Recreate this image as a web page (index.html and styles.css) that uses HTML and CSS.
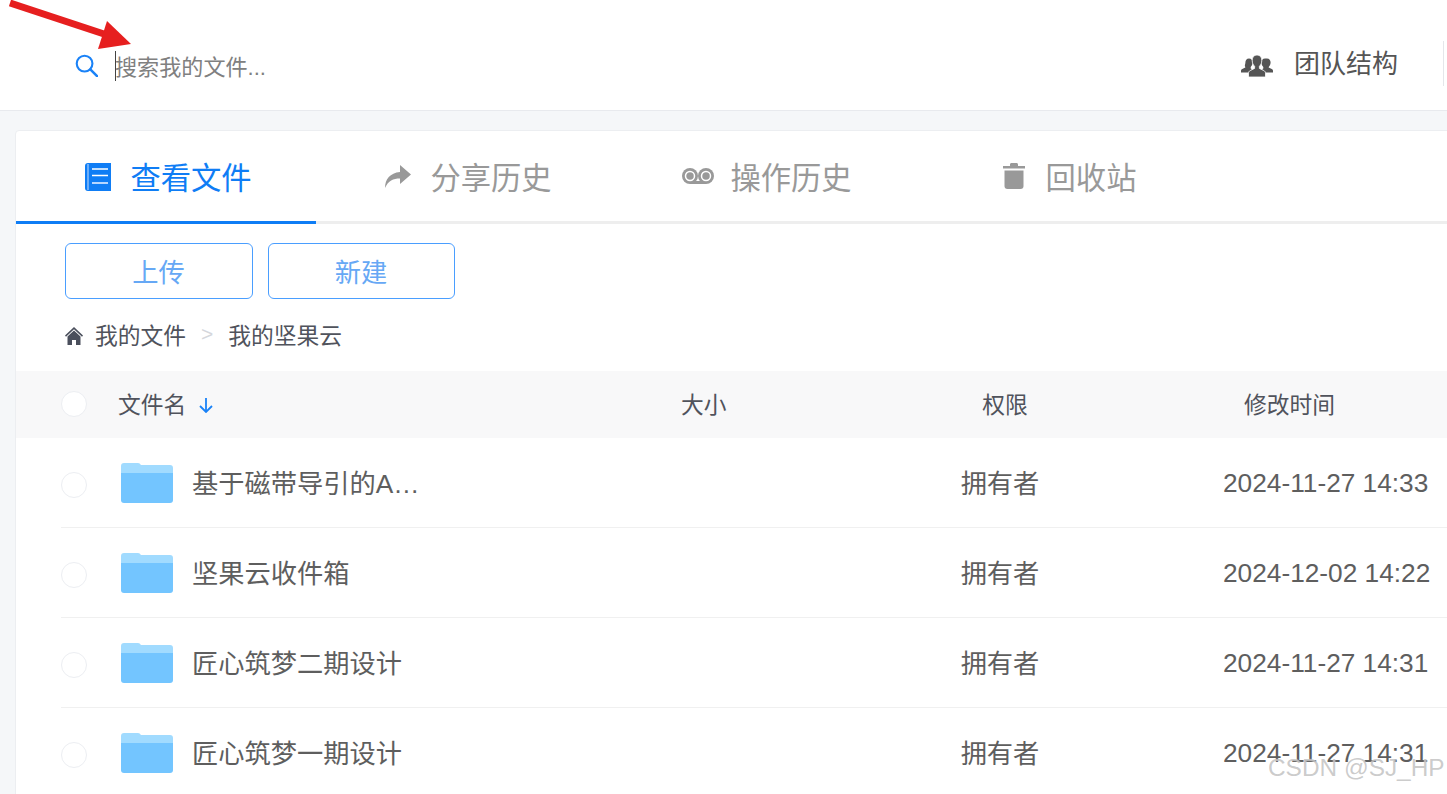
FILE: index.html
```html
<!DOCTYPE html>
<html lang="zh">
<head>
<meta charset="utf-8">
<title>我的文件</title>
<link rel="stylesheet" href="styles.css">
</head>
<body>
<div class="page">
  <header class="topbar">
    <div class="search">
      <svg class="search-icon" viewBox="0 0 24 24"><circle cx="10" cy="10" r="8.2" fill="none" stroke="#1a82f7" stroke-width="2.2"/><path d="M16 16l7 7" stroke="#1a82f7" stroke-width="2.6" stroke-linecap="round"/></svg>
      <span class="placeholder">搜索我的文件...</span>
    </div>
    <div class="team">
      <svg class="team-icon" viewBox="0 0 32 22"><g fill="#555"><path d="M8 3.5c2.4 0 3.600 1.800 3.600 4.100 0 1.900-.8 3.500-1.900 4.400v1.600l1.300.7c-1.300.8-2 1.800-2.200 3.200H0v-1.700c0-1 .5-1.500 1.300-1.900l3-1.500V12C3.200 11.100 4.400 9.500 4.400 7.600 4.400 5.300 5.600 3.500 8 3.500z"/><path d="M24 3.500c-2.400 0-3.600 1.800-3.600 4.100 0 1.900.8 3.500 1.900 4.400v1.600l-1.300.7c1.300.8 2 1.800 2.200 3.200H32v-1.700c0-1-.5-1.500-1.300-1.900l-3-1.500V12c1.100-.9 1.900-2.500 1.900-4.400 0-2.300-1.200-4.100-3.600-4.100z"/><path d="M16 0c3.200 0 4.800 2.400 4.800 5.400 0 2.500-.9 4.600-2.400 5.800v2.200l4.400 2.200c1.100.6 1.700 1.300 1.700 2.600V22H7.500v-3.800c0-1.300.6-2 1.700-2.600l4.400-2.200v-2.200c-1.500-1.200-2.400-3.300-2.400-5.800C11.200 2.400 12.800 0 16 0z" stroke="#fff" stroke-width=".8"/></g></svg>
      <span>团队结构</span>
    </div>
    <div class="top-divider"></div>
  </header>

  <main class="card">
    <nav class="tabs">
      <div class="tab tab-active">
        <span class="tab-icon tab-icon-book"><svg width="26" height="28" viewBox="0 0 26 28"><path d="M3 0h23v28H3a3 3 0 0 1-3-3V3a3 3 0 0 1 3-3z" fill="#0f7df5"/><path d="M3 1v26" stroke="#a9cffc" stroke-width="1.200"/><path d="M7 6h16M7 12.500h16" stroke="#fff" stroke-width="1.500"/><path d="M7 20h16" stroke="#b5d6ff" stroke-width="2"/></svg></span>
        <span>查看文件</span>
      </div>
      <div class="tab">
        <span class="tab-icon"><svg width="26" height="23" viewBox="0 0 26 23"><path d="M15 0l11 9.500L15 19v-5.500C8 13.500 3.500 15.500 0 23c0-9 5-15 15-16z" fill="#999"/></svg></span>
        <span>分享历史</span>
      </div>
      <div class="tab">
        <span class="tab-icon"><svg width="32" height="16" viewBox="0 0 32 16"><circle cx="8" cy="8" r="8" fill="#999"/><circle cx="24" cy="8" r="8" fill="#999"/><path d="M8 13h16v3H8z" fill="#999"/><circle cx="8" cy="8" r="4.500" fill="none" stroke="#fff" stroke-width="1.500"/><circle cx="24" cy="8" r="4.500" fill="none" stroke="#fff" stroke-width="1.500"/></svg></span>
        <span>操作历史</span>
      </div>
      <div class="tab">
        <span class="tab-icon"><svg width="22" height="26" viewBox="0 0 22 26"><path d="M0 3h7V1.500C7 .6 7.600 0 8.500 0h5c.9 0 1.500.6 1.500 1.500V3h7v2.500H0z" fill="#999"/><path d="M1.500 7.500h19V23a3 3 0 0 1-3 3h-13a3 3 0 0 1-3-3z" fill="#999"/></svg></span>
        <span>回收站</span>
      </div>
    </nav>

    <div class="actions">
      <button class="btn">上传</button>
      <button class="btn">新建</button>
    </div>

    <div class="crumbs">
      <svg class="home-icon" viewBox="0 0 18 18"><path d="M9 0l9 8.500-1 1.200L9 2.200 1 9.700 0 8.500z" fill="#4a4f5c"/><path d="M2.500 9.500L9 3.500l6.500 6V18H11v-5H7v5H2.500z" fill="#4a4f5c"/></svg>
      <span>我的文件</span>
      <span class="crumb-sep">&gt;</span>
      <span>我的坚果云</span>
    </div>

    <div class="grid thead">
      <span class="check"></span>
      <span class="th-name">文件名
        <svg class="sort-icon" viewBox="0 0 14 16"><path d="M7 1v14M1 9l6 6 6-6" fill="none" stroke="#1a82f7" stroke-width="1.800"/></svg>
      </span>
      <span>大小</span>
      <span class="th-perm">权限</span>
      <span class="th-time">修改时间</span>
    </div>

    <div class="grid row">
      <span class="check"></span>
      <span class="name"><svg class="folder" viewBox="0 0 52 40"><path d="M0 3a3 3 0 0 1 3-3h14c1.500 0 2 .8 3 2h29a3 3 0 0 1 3 3v8H0z" fill="#a1dbff"/><path d="M0 10h52v27a3 3 0 0 1-3 3H3a3 3 0 0 1-3-3z" fill="#73c5ff"/></svg><span class="fname">基于磁带导引的AGV小车设计</span></span>
      <span></span>
      <span class="perm">拥有者</span>
      <span class="time">2024-11-27 14:33</span>
    </div>
    <div class="grid row">
      <span class="check"></span>
      <span class="name"><svg class="folder" viewBox="0 0 52 40"><path d="M0 3a3 3 0 0 1 3-3h14c1.500 0 2 .8 3 2h29a3 3 0 0 1 3 3v8H0z" fill="#a1dbff"/><path d="M0 10h52v27a3 3 0 0 1-3 3H3a3 3 0 0 1-3-3z" fill="#73c5ff"/></svg><span class="fname">坚果云收件箱</span></span>
      <span></span>
      <span class="perm">拥有者</span>
      <span class="time">2024-12-02 14:22</span>
    </div>
    <div class="grid row">
      <span class="check"></span>
      <span class="name"><svg class="folder" viewBox="0 0 52 40"><path d="M0 3a3 3 0 0 1 3-3h14c1.500 0 2 .8 3 2h29a3 3 0 0 1 3 3v8H0z" fill="#a1dbff"/><path d="M0 10h52v27a3 3 0 0 1-3 3H3a3 3 0 0 1-3-3z" fill="#73c5ff"/></svg><span class="fname">匠心筑梦二期设计</span></span>
      <span></span>
      <span class="perm">拥有者</span>
      <span class="time">2024-11-27 14:31</span>
    </div>
    <div class="grid row">
      <span class="check"></span>
      <span class="name"><svg class="folder" viewBox="0 0 52 40"><path d="M0 3a3 3 0 0 1 3-3h14c1.500 0 2 .8 3 2h29a3 3 0 0 1 3 3v8H0z" fill="#a1dbff"/><path d="M0 10h52v27a3 3 0 0 1-3 3H3a3 3 0 0 1-3-3z" fill="#73c5ff"/></svg><span class="fname">匠心筑梦一期设计</span></span>
      <span></span>
      <span class="perm">拥有者</span>
      <span class="time">2024-11-27 14:31</span>
    </div>
  </main>

  <svg class="red-arrow" viewBox="0 0 135 50"><path d="M10 3L104 34" stroke="#e61f1f" stroke-width="7"/><path d="M107 21L131 44 98 49z" fill="#e61f1f"/></svg>
  <div class="caret"></div>
  <div class="watermark">CSDN @SJ_HP</div>
</div>
</body>
</html>
```

FILE: styles.css
```css
* { box-sizing: border-box; }
html, body { margin: 0; padding: 0; }
body {
  font-family: "Liberation Sans", "Noto Sans CJK SC", sans-serif;
  background: #f5f7f9;
  color: #606266;
  overflow: hidden;
}
.page {
  position: relative;
  width: 1447px;
  height: 794px;
  overflow: hidden;
}
.topbar {
  height: 111px;
  background: #fff;
  border-bottom: 1px solid #e8eaee;
  display: flex;
  align-items: center;
  padding-left: 75px;
  position: relative;
}
.search { display: flex; align-items: center; flex: 1; padding-top: 21px; }
.search-icon { width: 23px; height: 23px; margin-right: 17px; }
.placeholder { font-size: 22.1px; color: #808080; line-height: 30px; padding-top: 4px; }
.team { display: flex; align-items: center; font-size: 26px; color: #555; margin-top: 20px; }
.team-icon { width: 32px; height: 22px; margin-right: 21px; margin-top: 2px; }
.team span { line-height: 36px; position: relative; top: -1px; }
.top-divider { width: 1px; height: 45px; background: #e4e6ea; margin: 17px 3px 0 45px; }
.card {
  width: 1500px;
  height: 700px;
  margin: 19px 0 0 15px;
  background: #fff;
  border: 1px solid #eceef1;
  border-radius: 4px;
}
.tabs {
  display: flex;
  height: 93px;
  border-bottom: 3px solid #eeeeee;
}
.tab {
  width: 300px;
  height: 93px;
  display: flex;
  align-items: center;
  justify-content: center;
  gap: 14px;
  font-size: 30.3px;
  color: #999;
  padding-bottom: 3px;
}
.tab-active { color: #0f7df5; border-bottom: 3px solid #0f7df5; padding-bottom: 0; }
.tab-icon { width: 36px; display: flex; justify-content: center; }
.tab-icon-book { padding-top: 1px; }
.actions { display: flex; gap: 15px; padding: 19px 0 0 49px; }
.btn {
  width: 188px;
  height: 56px;
  background: #fff;
  border: 1px solid #4a9eff;
  border-radius: 6px;
  font: 26.25px "Liberation Sans", "Noto Sans CJK SC", sans-serif;
  color: #66a8f5;
  padding: 0 1px 0 0;
}
.btn + .btn { width: 187px; }
.crumbs {
  height: 72px;
  display: flex;
  align-items: center;
  padding: 0 0 2px 49px;
  font-size: 22.75px;
  color: #50535c;
}
.home-icon { width: 18px; height: 18px; margin-right: 12px; margin-top: 3px; }
.crumb-sep { color: #d5d7dc; margin: 0 15px; font-size: 21px; }
.grid {
  display: grid;
  grid-template-columns: 57px 563px 200px 238px 300px;
  align-items: center;
  padding-left: 45px;
}
.thead {
  height: 67px;
  background: #f8f8f9;
  font-size: 22.75px;
  color: #50535c;
  padding-bottom: 2px;
}
.th-name { display: flex; align-items: center; }
.sort-icon { width: 14px; height: 16px; margin-left: 13px; margin-top: 3px; }
.th-perm { text-align: center; padding-left: 10px; }
.th-time { padding-left: 125px; }
.check {
  width: 26px;
  height: 26px;
  border-radius: 50%;
  background: #fff;
  border: 1px solid #eceef2;
}
.row {
  height: 90px;
  font-size: 26.25px;
  color: #5e5e5e;
  position: relative;
  border-bottom: 1px solid #f0f0f0;
  margin-left: 45px;
  padding-left: 0;
}
.row .check { margin-top: 4px; }
.name { display: flex; align-items: center; }
.folder { width: 52px; height: 40px; margin: 0 19px 0 3px; flex: none; }
.fname { width: 230px; white-space: nowrap; overflow: hidden; text-overflow: ellipsis; padding-bottom: 2px; }
.perm { text-align: center; padding: 0 0 2px 0; }
.time { padding: 2px 0 0 104px; white-space: nowrap; }
.red-arrow { position: absolute; left: 0; top: 0; width: 135px; height: 50px; }
.caret { position: absolute; left: 115px; top: 51px; width: 1px; height: 30px; background: #444; }
.watermark {
  position: absolute;
  left: 1268px;
  top: 751px;
  font-size: 24.4px;
  line-height: 34px;
  color: rgba(160,160,160,.55);
  text-shadow: 0 0 1px rgba(255,255,255,.8);
  white-space: nowrap;
}
```
